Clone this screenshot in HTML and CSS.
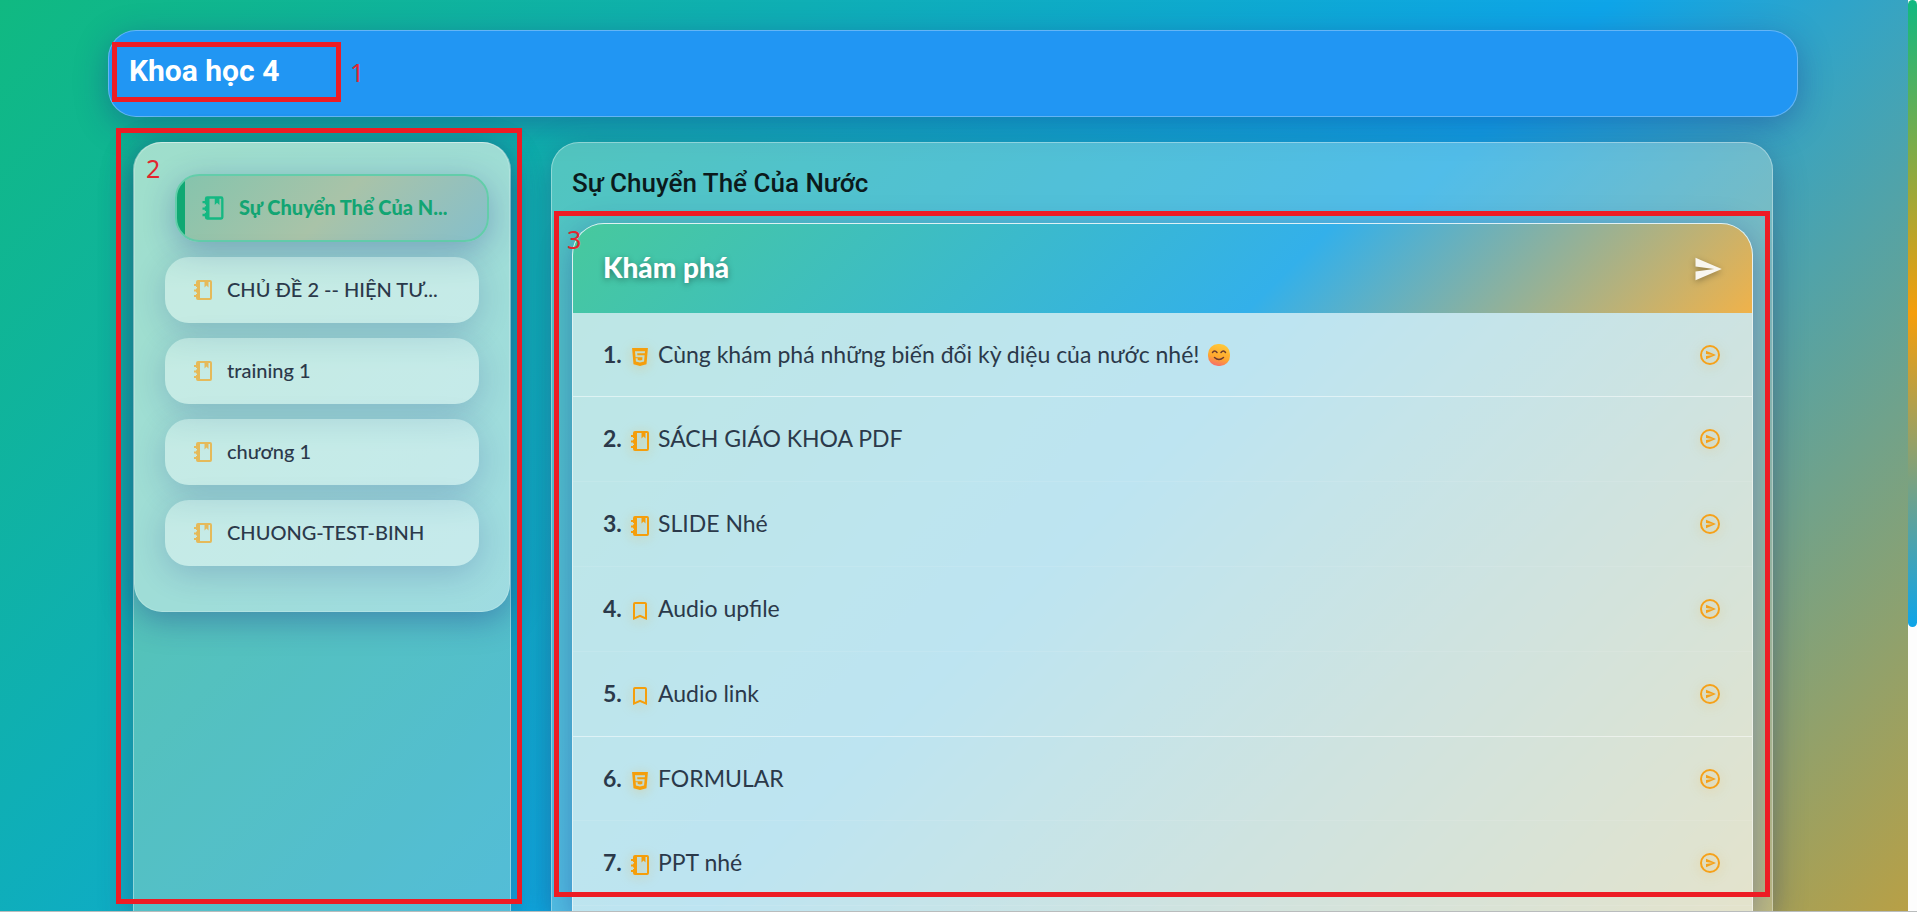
FILE: index.html
```html
<!DOCTYPE html>
<html lang="vi">
<head>
<meta charset="utf-8">
<meta name="viewport" content="width=device-width, initial-scale=1">
<title>Khoa học 4</title>
<link rel="stylesheet" href="styles.css">
</head>
<body>
<svg class="sprite" aria-hidden="true">
  <symbol id="notebook" viewBox="0 0 24 24"><path fill-rule="evenodd" d="M7 2H19A2 2 0 0 1 21 4V20A2 2 0 0 1 19 22H7A2 2 0 0 1 5 20V19H3V17H5V16H6V14.500H5V13.500H3V11.500H5V10.500H6V9H5V8H3V6H5V4A2 2 0 0 1 7 2ZM9 4V20H19V4H17.500V9.500L15.500 7.500L13.500 9.500V4Z"/></symbol>
  <symbol id="bookmark" viewBox="0 0 24 24"><path d="M17 18L12 15.820L7 18V5H17M17 3H7A2 2 0 0 0 5 5V21L12 18L19 21V5C19 3.890 18.100 3 17 3Z"/></symbol>
  <symbol id="html5" viewBox="0 0 24 24"><path d="M12 17.560L16.070 16.430L16.620 10.330H9.380L9.200 8.300H16.800L17 6.310H7L7.560 12.320H14.450L14.220 14.900L12 15.500L9.780 14.900L9.640 13.240H7.640L7.930 16.430L12 17.560M4.070 3H19.930L18.500 19.200L12 21L5.500 19.200L4.070 3Z"/></symbol>
  <symbol id="send" viewBox="0 0 24 24"><path d="M2 21L23 12L2 3V10L17 12L2 14V21Z"/></symbol>
  <symbol id="open" viewBox="0 0 24 24"><path d="M12 2A10 10 0 0 1 22 12A10 10 0 0 1 12 22A10 10 0 0 1 2 12A10 10 0 0 1 12 2M12 4A8 8 0 0 0 4 12A8 8 0 0 0 12 20A8 8 0 0 0 20 12A8 8 0 0 0 12 4M8 7.710V11.050L15.140 12L8 12.950V16.290L18 12L8 7.710Z"/></symbol>
</svg>
<div class="page">
  <div class="container">
    <header class="topbar">
      <h1 class="topbar-title">Khoa học 4</h1>
      <div class="mark mark-title"></div>
      <span class="mark-number number-title">1</span>
    </header>
    <div class="columns">
      <aside class="sidebar">
        <nav class="chapters">
          <a class="chapter chapter-active" href="#"><svg class="icon icon-active"><use href="#notebook"/></svg><span class="chapter-name">Sự Chuyển Thể Của N...</span></a>
          <a class="chapter" href="#"><svg class="icon"><use href="#notebook"/></svg><span class="chapter-name">CHỦ ĐỀ 2 -- HIỆN TƯ...</span></a>
          <a class="chapter" href="#"><svg class="icon"><use href="#notebook"/></svg><span class="chapter-name">training 1</span></a>
          <a class="chapter" href="#"><svg class="icon"><use href="#notebook"/></svg><span class="chapter-name">chương 1</span></a>
          <a class="chapter" href="#"><svg class="icon"><use href="#notebook"/></svg><span class="chapter-name">CHUONG-TEST-BINH</span></a>
        </nav>
        <div class="mark mark-sidebar"></div>
        <span class="mark-number number-sidebar">2</span>
      </aside>
      <main class="content">
        <h2 class="content-title">Sự Chuyển Thể Của Nước</h2>
        <section class="lessons">
          <div class="lessons-head">
            <h3 class="lessons-title">Khám phá</h3>
            <button class="icon-button" type="button" aria-label="Khám phá"><svg class="icon icon-send"><use href="#send"/></svg></button>
          </div>
          <ol class="lesson-list">
            <li class="lesson lesson-short lesson-divided"><b class="lesson-number">1.</b><svg class="icon lesson-icon"><use href="#html5"/></svg><a class="lesson-name" href="#">Cùng khám phá những biến đổi kỳ diệu của nước nhé!</a><svg class="smile" viewBox="0 0 22 22" role="img" aria-label="😊"><defs><linearGradient id="face" x1="0.600" y1="0" x2="0.300" y2="1"><stop offset="0" stop-color="#ffc93a"/><stop offset="0.600" stop-color="#ffa72e"/><stop offset="1" stop-color="#f66a6f"/></linearGradient></defs><rect width="22" height="22" rx="10" fill="url(#face)"/><g fill="none" stroke="#6b3a2e" stroke-width="1.500" stroke-linecap="round"><path d="M4.500 8.500Q6.500 5.500 9 8.500M13 8.500Q15.500 5.500 17.500 8.500M6.500 13.500Q11 17.500 15.500 13.500"/></g></svg><button class="icon-button lesson-open" type="button" aria-label="Mở bài 1"><svg class="icon"><use href="#open"/></svg></button></li>
            <li class="lesson"><b class="lesson-number">2.</b><svg class="icon lesson-icon"><use href="#notebook"/></svg><a class="lesson-name" href="#">SÁCH GIÁO KHOA PDF</a><button class="icon-button lesson-open" type="button" aria-label="Mở bài 2"><svg class="icon"><use href="#open"/></svg></button></li>
            <li class="lesson"><b class="lesson-number">3.</b><svg class="icon lesson-icon"><use href="#notebook"/></svg><a class="lesson-name" href="#">SLIDE Nhé</a><button class="icon-button lesson-open" type="button" aria-label="Mở bài 3"><svg class="icon"><use href="#open"/></svg></button></li>
            <li class="lesson"><b class="lesson-number">4.</b><svg class="icon lesson-icon"><use href="#bookmark"/></svg><a class="lesson-name" href="#">Audio upfile</a><button class="icon-button lesson-open" type="button" aria-label="Mở bài 4"><svg class="icon"><use href="#open"/></svg></button></li>
            <li class="lesson lesson-divided"><b class="lesson-number">5.</b><svg class="icon lesson-icon"><use href="#bookmark"/></svg><a class="lesson-name" href="#">Audio link</a><button class="icon-button lesson-open" type="button" aria-label="Mở bài 5"><svg class="icon"><use href="#open"/></svg></button></li>
            <li class="lesson lesson-short"><b class="lesson-number">6.</b><svg class="icon lesson-icon"><use href="#html5"/></svg><a class="lesson-name" href="#">FORMULAR</a><button class="icon-button lesson-open" type="button" aria-label="Mở bài 6"><svg class="icon"><use href="#open"/></svg></button></li>
            <li class="lesson"><b class="lesson-number">7.</b><svg class="icon lesson-icon"><use href="#notebook"/></svg><a class="lesson-name" href="#">PPT nhé</a><button class="icon-button lesson-open" type="button" aria-label="Mở bài 7"><svg class="icon"><use href="#open"/></svg></button></li>
          </ol>
        </section>
        <div class="mark mark-content"></div>
        <span class="mark-number number-content">3</span>
      </main>
    </div>
  </div>
  <div class="scroll-track"><div class="scroll-thumb"></div></div>
</div>
</body>
</html>
```
FILE: styles.css
```css
* { box-sizing: border-box; }
body { margin: 0; font-family: Lato, "Noto Sans", sans-serif; color: #2b394a; }
h1, h2, h3, ol { margin: 0; padding: 0; }
a { color: inherit; text-decoration: none; }
.sprite { display: none; }

.page {
  display: flex;
  height: 100vh;
  overflow: hidden;
  border-bottom: 1px solid #b9bcbd;
  background: linear-gradient(135deg, #10b981 0%, #0ea5e9 57%, #f59e0b 115%);
}
.container {
  flex: 1;
  display: flex;
  flex-direction: column;
  min-width: 0;
  padding: 30px 110px 0 108px;
}

.topbar {
  position: relative;
  padding: 21px 20px 26px;
  border: 1px solid rgba(255, 255, 255, 0.3);
  border-radius: 28px;
  background: #2196f3;
  box-shadow: 0 8px 32px rgba(31, 38, 135, 0.37);
}
.topbar-title {
  font: 700 30px/38px Roboto, sans-serif;
  color: #fff;
}

.columns {
  flex: 1;
  display: grid;
  grid-template-columns: 378px minmax(0, 1fr);
  gap: 40px;
  min-height: 0;
  padding: 25px 25px 0;
}
.sidebar, .content {
  position: relative;
  border: 1px solid rgba(255, 255, 255, 0.35);
  border-bottom: 0;
  border-radius: 28px 28px 0 0;
  background: rgba(255, 250, 235, 0.28);
  box-shadow: 0 8px 32px rgba(50, 60, 110, 0.42);
}
.sidebar { background: rgba(255, 240, 205, 0.29); }
.chapters {
  display: flex;
  flex-direction: column;
  gap: 15px;
  margin-top: -1px;
  padding: 31px 30px 45px;
  border: 1px solid rgba(255, 255, 255, 0.2);
  border-radius: 28px;
  background: rgba(255, 255, 255, 0.44);
  box-shadow: 0 8px 32px rgba(31, 38, 135, 0.37);
}
.chapter {
  display: flex;
  align-items: center;
  gap: 12px;
  height: 66px;
  padding: 0 25px 0 26px;
  border-radius: 24px;
  background: linear-gradient(rgba(255, 255, 255, 0.3), rgba(255, 255, 255, 0.4) 50%);
  box-shadow: 0 8px 32px rgba(31, 38, 135, 0.2);
  font-size: 20px;
  font-weight: 500;
}
.chapter .icon { color: #e5ba5a; }
.chapter-name {
  overflow: hidden;
  padding-bottom: 2px;
  white-space: nowrap;
  line-height: 28px;
}
.chapter-active {
  height: 68px;
  margin: 0 -10px 0 10px;
  padding: 0 12px 0 22px;
  border: 2px solid #63cdaa;
  background:
    linear-gradient(#10a873, #10a873) 0 0 / 8px 100% no-repeat,
    linear-gradient(135deg, #84c4ad, #a9c3a8 50%, #85bfcb);
  box-shadow: 0 8px 32px rgba(31, 38, 135, 0.3);
  color: #12a573;
  font-weight: 900;
}
.chapter-active .icon { color: #14b882; }

.icon {
  display: block;
  flex: none;
  width: 24px;
  height: 24px;
  fill: currentColor;
}
.icon-active { width: 28px; height: 28px; }
.icon-send { width: 30px; height: 30px; }
.icon-button {
  padding: 0;
  border: 0;
  background: none;
  color: #f8f6f0;
  filter: drop-shadow(0 2px 3px rgba(0, 0, 0, 0.3));
}

.content {
  display: flex;
  flex-direction: column;
  padding: 20px 19px 0 20px;
}
.content-title {
  margin-bottom: 20px;
  font: 500 26px/40px Roboto, sans-serif;
  color: #0b1a1c;
}
.lessons {
  flex: 1;
  min-height: 0;
  overflow: hidden;
  border: 1px solid rgba(255, 255, 255, 0.5);
  border-bottom: 0;
  border-radius: 32px 32px 0 0;
  background: rgba(250, 250, 245, 0.64);
  box-shadow: 0 8px 32px rgba(31, 38, 135, 0.37);
}
.lessons-head {
  display: flex;
  align-items: center;
  justify-content: space-between;
  height: 89px;
  padding: 0 29px 0 30px;
  background: linear-gradient(135deg, #47c99d, #33b0ea 60%, #f0b24a);
}
.lessons-title {
  padding-bottom: 4px;
  font-size: 28px;
  font-weight: 900;
  color: #fff;
  text-shadow: 0 2px 6px rgba(0, 0, 0, 0.35);
}
.lesson-list { list-style: none; }
.lesson {
  display: flex;
  align-items: center;
  height: 85px;
  padding: 0 30px;
  border-bottom: 1px solid rgba(255, 255, 255, 0.1);
  font-size: 23px;
}
.lesson-short { height: 84px; }
.lesson-divided { border-bottom-color: rgba(255, 255, 255, 0.5); }
.lesson-number { width: 25px; padding-bottom: 2px; }
.lesson-name { padding-bottom: 2px; }
.lesson-icon {
  margin: 4px 6px 0 0;
  color: #f59e0b;
  filter: drop-shadow(0 2px 6px rgba(245, 158, 11, 0.35));
}
.smile { width: 22px; height: 22px; margin-left: 8px; }
.lesson-open {
  margin-left: auto;
  color: #f5a11a;
  filter: drop-shadow(0 2px 6px rgba(245, 158, 11, 0.3));
}

.scroll-track { flex: none; width: 9px; background: #fdfdfd; }
.scroll-thumb {
  height: 627px;
  border-radius: 5px;
  background: linear-gradient(#10b981, #f59e0b, #0ea5e9);
}

.mark { position: absolute; border: 5px solid #ed1c24; pointer-events: none; }
.mark-title { left: 3px; top: 11px; width: 229px; height: 60px; }
.mark-sidebar { inset: -15px -12px 7px -18px; }
.mark-content { inset: 68px 2px 14px 2px; }
.mark-number {
  position: absolute;
  font: 400 25px/30px "Noto Sans", sans-serif;
  color: #e2262e;
}
.number-title { left: 241px; top: 26px; }
.number-sidebar { left: 12px; top: 10px; }
.number-content { left: 15px; top: 81px; }
```
